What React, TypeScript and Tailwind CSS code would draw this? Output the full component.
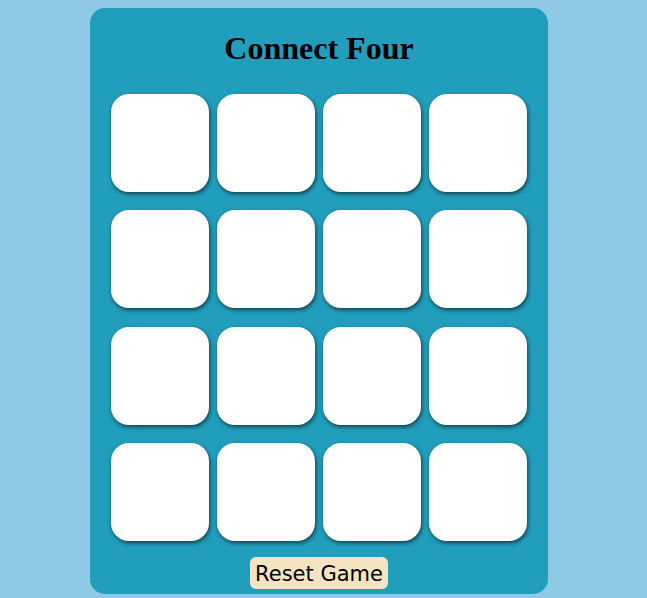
export default function App() {
  const cells = Array.from({ length: 16 });
  return (
    <div className="min-h-screen bg-[#8ecae6] pt-2">
      <div className="ml-[90px] w-[458px] h-[586px] rounded-[15px] bg-[#219ebc] px-[21px] pt-[22px] flex flex-col items-center">
        <h1 className="text-[32px] leading-[37px] font-bold text-black font-['Liberation_Serif',serif] mb-[27px]">
          Connect Four
        </h1>
        <div className="grid grid-cols-4 gap-x-2 gap-y-[18.4px]">
          {cells.map((_, i) => (
            <div
              key={i}
              className="w-[98px] h-[98px] bg-white rounded-[18px] shadow-[1px_2px_4px_rgba(0,0,0,0.6)]"
            />
          ))}
        </div>
        <button className="mt-4 h-8 px-[5px] pt-[2px] rounded-md bg-[#f4e4c1] text-[21px] leading-none text-black font-['DejaVu_Sans',sans-serif]">
          Reset Game
        </button>
      </div>
    </div>
  );
}
